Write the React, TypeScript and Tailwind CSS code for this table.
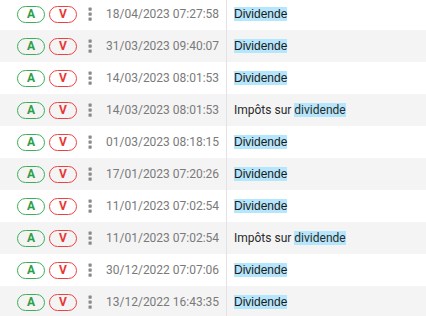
import React from 'react';

type Row = { date: string; label: 'div' | 'tax' };

const rows: Row[] = [
  { date: '18/04/2023 07:27:58', label: 'div' },
  { date: '31/03/2023 09:40:07', label: 'div' },
  { date: '14/03/2023 08:01:53', label: 'div' },
  { date: '14/03/2023 08:01:53', label: 'tax' },
  { date: '01/03/2023 08:18:15', label: 'div' },
  { date: '17/01/2023 07:20:26', label: 'div' },
  { date: '11/01/2023 07:02:54', label: 'div' },
  { date: '11/01/2023 07:02:54', label: 'tax' },
  { date: '30/12/2022 07:07:06', label: 'div' },
  { date: '13/12/2022 16:43:35', label: 'div' },
];

const MoreVert = () => (
  <svg width="18" height="18" viewBox="0 0 18 18" className="text-[#8a8a8a]">
    <rect x="7.5" y="2.5" width="3.2" height="3.2" rx="0.6" fill="currentColor" />
    <rect x="7.5" y="7.5" width="3.2" height="3.2" rx="0.6" fill="currentColor" />
    <rect x="7.5" y="12.5" width="3.2" height="3.2" rx="0.6" fill="currentColor" />
  </svg>
);

const App: React.FC = () => {
  return (
    <div className="w-[426px] h-[316px] overflow-hidden bg-white font-['Roboto',sans-serif]">
      <div className="-mt-[2px]">
        {rows.map((r, i) => (
          <div
            key={i}
            className={`flex items-center h-[32px] ${i % 2 === 1 ? 'bg-[#f4f4f4]' : 'bg-white'}`}
          >
            {/* actions */}
            <div className="flex items-center pl-[17px] w-[226px] shrink-0">
              <span className="flex items-center justify-center w-[28px] h-[17px] rounded-full border border-[#3fae55] text-[#2e9e46] text-[12px] font-bold leading-none">
                A
              </span>
              <span className="ml-[4px] flex items-center justify-center w-[28px] h-[17px] rounded-full border border-[#ef4040] text-[#e53935] text-[12px] font-bold leading-none">
                V
              </span>
              <span className="ml-[4px]">
                <MoreVert />
              </span>
              <span className="ml-[7px] text-[12px] text-[#7a7a7a] whitespace-nowrap">{r.date}</span>
            </div>
            {/* label */}
            <div className="self-stretch border-l border-[#e2e2e2] flex items-center pl-[7px]">
              {r.label === 'div' ? (
                <span className="bg-[#b6e6fb] text-[#1a1a1a] text-[12px] leading-[14px] font-['Liberation_Sans',sans-serif]">
                  Dividende
                </span>
              ) : (
                <span className="text-[12px] leading-[14px] text-[#2a2a2a]">
                  Impôts sur <span className="bg-[#b6e6fb]">dividende</span>
                </span>
              )}
            </div>
          </div>
        ))}
      </div>
    </div>
  );
};

export default App;
